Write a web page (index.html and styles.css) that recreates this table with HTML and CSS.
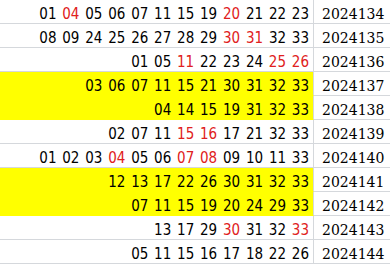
FILE: index.html
```html
<!DOCTYPE html>
<html>
<head>
<meta charset="utf-8">
<link rel="stylesheet" href="styles.css">
</head>
<body>
<div class="sheet">
  <div class="row"><div class="nums">01 <span class="r">04</span> 05 06 07 11 15 19 <span class="r">20</span> 21 22 23</div><div class="id">2024134</div></div>
  <div class="row"><div class="nums">08 09 24 25 26 27 28 29 <span class="r">30</span> <span class="r">31</span> 32 33</div><div class="id">2024135</div></div>
  <div class="row"><div class="nums">01 05 <span class="r">11</span> 22 23 24 <span class="r">25</span> <span class="r">26</span></div><div class="id">2024136</div></div>
  <div class="row hl"><div class="nums">03 06 07 11 15 21 30 31 32 33</div><div class="id">2024137</div></div>
  <div class="row hl"><div class="nums">04 14 15 19 31 32 33</div><div class="id">2024138</div></div>
  <div class="row"><div class="nums">02 07 11 <span class="r">15</span> <span class="r">16</span> 17 21 32 33</div><div class="id">2024139</div></div>
  <div class="row"><div class="nums">01 02 03 <span class="r">04</span> 05 06 <span class="r">07</span> <span class="r">08</span> 09 10 11 33</div><div class="id">2024140</div></div>
  <div class="row hl"><div class="nums">12 13 17 22 26 30 31 32 33</div><div class="id">2024141</div></div>
  <div class="row hl"><div class="nums">07 11 15 19 20 24 29 33</div><div class="id">2024142</div></div>
  <div class="row"><div class="nums">13 17 29 <span class="r">30</span> 31 32 <span class="r">33</span></div><div class="id">2024143</div></div>
  <div class="row"><div class="nums">05 11 15 16 17 18 22 26</div><div class="id">2024144</div></div>
</div>
</body>
</html>
```
FILE: styles.css
```css
html, body {
  margin: 0;
  padding: 0;
  background: #ffffff;
}
.sheet {
  width: 390px;
  overflow: hidden;
}
.row {
  display: flex;
  height: 24px;
}
.nums {
  box-sizing: border-box;
  width: 314px;
  flex: none;
  height: 24px;
  padding: 5px 4px 0 0;
  text-align: right;
  font-family: "DejaVu Sans Condensed", "DejaVu Sans", sans-serif;
  font-stretch: condensed;
  font-size: 15px;
  line-height: 18px;
  word-spacing: 1.5px;
  color: #000;
  white-space: nowrap;
  border-right: 1px solid #d5d8dc;
  border-bottom: 1px solid #d5d8dc;
}
.id {
  box-sizing: border-box;
  flex: 1;
  height: 24px;
  padding: 5px 0 0 8px;
  font-family: "DejaVu Serif", serif;
  font-size: 14px;
  line-height: 18px;
  color: #000;
  white-space: nowrap;
  border-bottom: 1px solid #d5d8dc;
}
.hl .nums {
  background: #ffff00;
  border-bottom-color: #ffff00;
}
.r {
  color: #e02020;
}
```
